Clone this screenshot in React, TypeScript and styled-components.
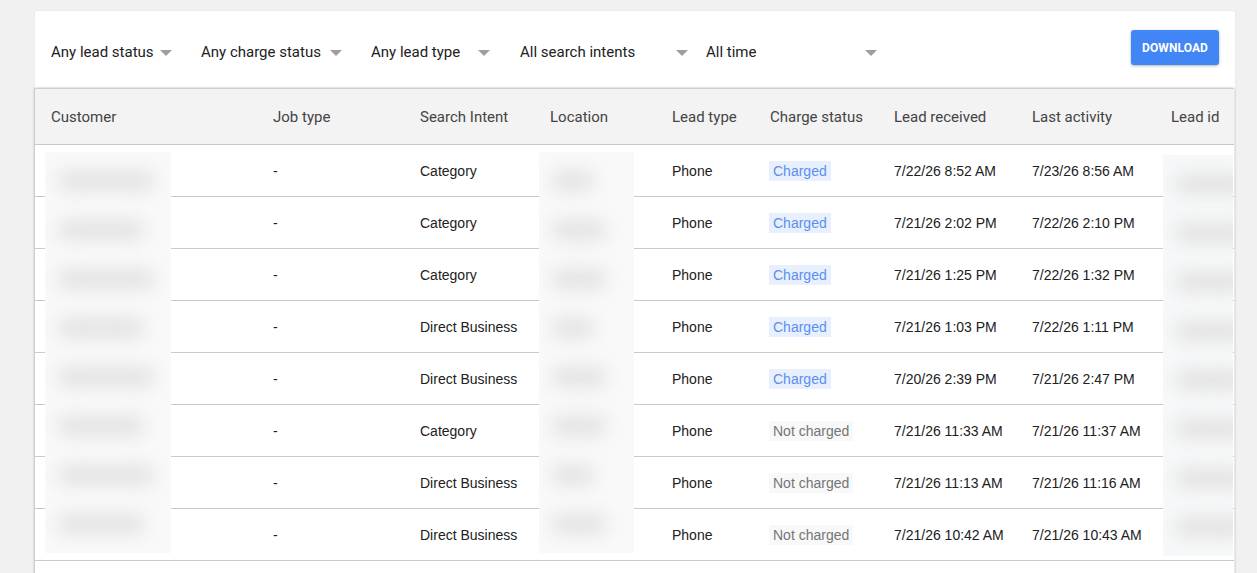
import { FC } from "react";
import styled, { createGlobalStyle } from "styled-components";

const GlobalStyle = createGlobalStyle`
  body {
    margin: 0;
    background: #f1f1f1;
    font-family: Roboto, "Liberation Sans", Arial, sans-serif;
    color: #212121;
  }
`;

interface Lead {
  intent: string;
  charged: boolean;
  received: string;
  activity: string;
}

const leads: Lead[] = [
  { intent: "Category", charged: true, received: "7/22/26 8:52 AM", activity: "7/23/26 8:56 AM" },
  { intent: "Category", charged: true, received: "7/21/26 2:02 PM", activity: "7/22/26 2:10 PM" },
  { intent: "Category", charged: true, received: "7/21/26 1:25 PM", activity: "7/22/26 1:32 PM" },
  { intent: "Direct Business", charged: true, received: "7/21/26 1:03 PM", activity: "7/22/26 1:11 PM" },
  { intent: "Direct Business", charged: true, received: "7/20/26 2:39 PM", activity: "7/21/26 2:47 PM" },
  { intent: "Category", charged: false, received: "7/21/26 11:33 AM", activity: "7/21/26 11:37 AM" },
  { intent: "Direct Business", charged: false, received: "7/21/26 11:13 AM", activity: "7/21/26 11:16 AM" },
  { intent: "Direct Business", charged: false, received: "7/21/26 10:42 AM", activity: "7/21/26 10:43 AM" },
];

// filtros de arriba: texto + ancho total + hueco a la derecha
const filters = [
  { label: "Any lead status", width: 121, space: 29 },
  { label: "Any charge status", width: 141, space: 29 },
  { label: "Any lead type", width: 119, space: 30 },
  { label: "All search intents", width: 168, space: 18 },
  { label: "All time", width: 171, space: 0 },
];

const headers = [
  "Customer",
  "Job type",
  "Search Intent",
  "Location",
  "Lead type",
  "Charge status",
  "Lead received",
  "Last activity",
  "Lead id",
];

const COLS = "222px 147px 130px 122px 98px 124px 138px 139px 140px";

const App: FC = () => {
  return (
    <>
      <GlobalStyle />
      <Page>
        <Card>
          {/* barra de filtros */}
          <FilterBar>
            {filters.map((f) => (
              <Dropdown key={f.label} w={f.width} space={f.space}>
                <span>{f.label}</span>
                <Caret />
              </Dropdown>
            ))}
            <Spacer />
            <DownloadButton>DOWNLOAD</DownloadButton>
          </FilterBar>

          {/* tabla */}
          <TableWrap>
            <HeaderRow>
              {headers.map((h) => (
                <HeaderCell key={h}>{h}</HeaderCell>
              ))}
            </HeaderRow>
            <Body>
              {leads.map((l, i) => (
                <Row key={i}>
                  <Cell />
                  <Cell>-</Cell>
                  <Cell>{l.intent}</Cell>
                  <Cell />
                  <Cell>Phone</Cell>
                  <Cell>
                    <Badge charged={l.charged}>{l.charged ? "Charged" : "Not charged"}</Badge>
                  </Cell>
                  <Cell>{l.received}</Cell>
                  <Cell>{l.activity}</Cell>
                  <Cell />
                </Row>
              ))}

              {/* datos privados tapados */}
              <Redacted left={10} width={126} top={7}>
                {leads.map((_, i) => (
                  <Blob key={i} w={i % 2 ? 88 : 98} />
                ))}
              </Redacted>
              <Redacted left={504} width={95} top={7}>
                {leads.map((_, i) => (
                  <Blob key={i} w={i % 3 ? 56 : 44} />
                ))}
              </Redacted>
              <Redacted left={1128} width={70} top={10} tint>
                {leads.map((_, i) => (
                  <Blob key={i} w={72} />
                ))}
              </Redacted>
            </Body>
          </TableWrap>
        </Card>
      </Page>
    </>
  );
};

export default App;

const Page = styled.div`
  padding: 11px 22px 0 35px;
  height: 573px;
  box-sizing: border-box;
  overflow: hidden;
`;

const Card = styled.div`
  width: 1200px;
  background: #fff;
  border-radius: 2px;
  box-shadow: 0 0 2px rgba(0, 0, 0, 0.08);
`;

const FilterBar = styled.div`
  height: 77px;
  display: flex;
  align-items: center;
  padding: 0 16px 0 16px;
  box-sizing: border-box;
`;

const Dropdown = styled.div<{ w: number; space: number }>`
  width: ${(p) => p.w}px;
  margin-right: ${(p) => p.space}px;
  display: flex;
  align-items: center;
  justify-content: space-between;
  font-size: 15px;
  color: #212121;
  padding-top: 5px;
`;

const Caret = styled.span`
  width: 0;
  height: 0;
  border-left: 6px solid transparent;
  border-right: 6px solid transparent;
  border-top: 6px solid #9e9e9e;
  margin-top: 1px;
`;

const Spacer = styled.div`
  flex: 1;
`;

const DownloadButton = styled.button`
  height: 35px;
  width: 88px;
  border: none;
  border-radius: 3px;
  background: #4285f4;
  color: #fff;
  font-family: Roboto, "Liberation Sans", Arial, sans-serif;
  font-size: 12px;
  font-weight: 700;
  letter-spacing: 0.1px;
  box-shadow: 0 1px 3px rgba(0, 0, 0, 0.3);
  margin-top: -4px;
  padding: 0;
`;

const TableWrap = styled.div`
  width: 1199px;
  overflow: hidden;
  border-top: 1px solid #cfcfcf;
  box-shadow: -1px 0 2px rgba(0, 0, 0, 0.18), 1px 0 2px rgba(0, 0, 0, 0.12);
`;

const HeaderRow = styled.div`
  display: grid;
  grid-template-columns: ${COLS};
  height: 55px;
  background: #f3f3f3;
  border-bottom: 1px solid #c9c9c9;
`;

const HeaderCell = styled.div`
  display: flex;
  align-items: center;
  padding-left: 16px;
  font-size: 15px;
  font-weight: 400;
  color: #444;
  white-space: nowrap;
`;

const Body = styled.div`
  position: relative;
  padding-bottom: 24px;
`;

const Row = styled.div`
  display: grid;
  grid-template-columns: ${COLS};
  height: 51px;
  border-bottom: 1px solid #cbcbcb;
`;

const Cell = styled.div`
  display: flex;
  align-items: center;
  padding-left: 16px;
  font-family: "Liberation Sans", Arial, sans-serif;
  font-size: 14px;
  color: #212121;
  white-space: nowrap;
`;

const Badge = styled.span<{ charged: boolean }>`
  background: ${(p) => (p.charged ? "#e8f0fe" : "#f8f8f8")};
  color: ${(p) => (p.charged ? "#5b8fef" : "#757575")};
  padding: 1px 4px;
  margin-left: -1px;
  line-height: 18px;
`;

const Redacted = styled.div<{ left: number; width: number; top: number; tint?: boolean }>`
  position: absolute;
  left: ${(p) => p.left}px;
  width: ${(p) => p.width}px;
  top: ${(p) => p.top}px;
  height: 401px;
  background: ${(p) => (p.tint ? "#f7f8f9" : "#f9f9f9")};
  display: flex;
  flex-direction: column;
  justify-content: space-around;
  padding: 4px 6px;
  box-sizing: border-box;
  overflow: hidden;
`;

const Blob = styled.div<{ w: number }>`
  width: ${(p) => p.w}px;
  height: 20px;
  background: #e2e2e2;
  border-radius: 10px;
  filter: blur(9px);
  margin-left: 6px;
`;
